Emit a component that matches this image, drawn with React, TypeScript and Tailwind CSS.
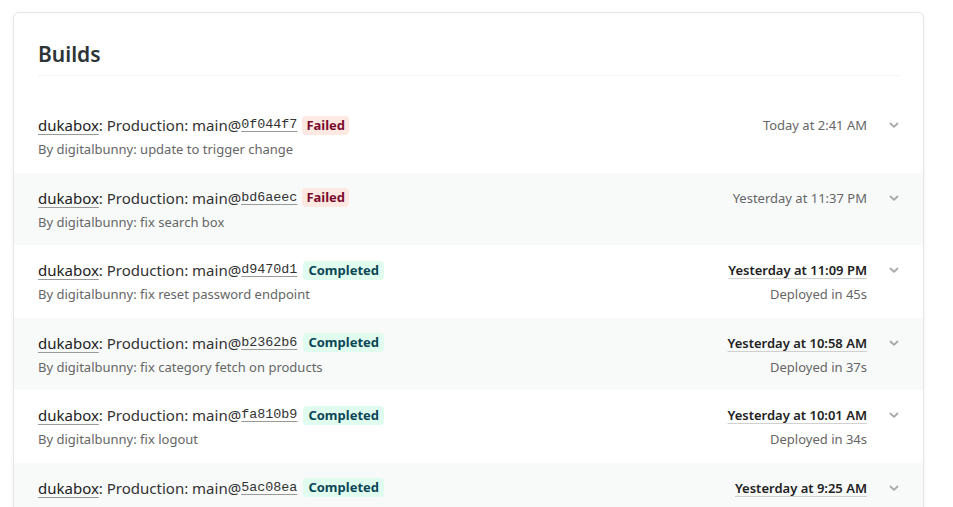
import React from "react";

type Build = {
  hash: string;
  status: "Failed" | "Completed";
  msg?: string;
  time: string;
  deployed?: string;
};

const builds: Build[] = [
  { hash: "0f044f7", status: "Failed", msg: "update to trigger change", time: "Today at 2:41 AM" },
  { hash: "bd6aeec", status: "Failed", msg: "fix search box", time: "Yesterday at 11:37 PM" },
  { hash: "d9470d1", status: "Completed", msg: "fix reset password endpoint", time: "Yesterday at 11:09 PM", deployed: "Deployed in 45s" },
  { hash: "b2362b6", status: "Completed", msg: "fix category fetch on products", time: "Yesterday at 10:58 AM", deployed: "Deployed in 37s" },
  { hash: "fa810b9", status: "Completed", msg: "fix logout", time: "Yesterday at 10:01 AM", deployed: "Deployed in 34s" },
  { hash: "5ac08ea", status: "Completed", time: "Yesterday at 9:25 AM" },
];

function Chevron() {
  return (
    <svg width="10" height="8" viewBox="0 0 10 8" className="shrink-0">
      <path d="M1.5 2.5 L5 5.8 L8.5 2.5" fill="none" stroke="#a8a8a8" strokeWidth="1.8" strokeLinecap="round" strokeLinejoin="round" />
    </svg>
  );
}

export default function App() {
  return (
    <div className="h-[507px] overflow-hidden bg-white pl-[13px] pr-[29px] pt-[12px] font-['Noto_Sans',sans-serif]">
      <div className="rounded-md border border-[#e6e6e6] bg-white shadow-[0_1px_4px_rgba(0,0,0,0.06)] overflow-hidden">
        <div className="px-6 pt-[25px]">
          <h1 className="text-[21px] leading-[32px] font-semibold text-[#2d3436] pb-[5px] border-b border-[#f2f3f3]">
            Builds
          </h1>
        </div>
        <div className="mt-[24px]">
          {builds.map((b, i) => (
            <div
              key={b.hash}
              className={`flex h-[72.6px] items-start justify-between px-6 pt-[15px] ${i % 2 === 1 ? "bg-[#f8fafa]" : "bg-white"}`}
            >
              <div className="flex flex-col gap-[4px]">
                <div className="flex items-center text-[15px] leading-[20px] text-[#333]">
                  <span className="underline decoration-[#9a9a9a] underline-offset-[3px] text-[#222]">dukabox</span>
                  <span>: Production: main@</span>
                  <span className="font-['Liberation_Mono',monospace] text-[13.4px] underline decoration-[#9a9a9a] underline-offset-[3px] text-[#333]">
                    {b.hash}
                  </span>
                  {b.status === "Failed" ? (
                    <span className="ml-[5px] rounded-[4px] bg-[#fde9e1] px-[4px] text-[13px] leading-[19px] font-bold text-[#7a0b2f]">
                      Failed
                    </span>
                  ) : (
                    <span className="ml-[6px] rounded-[4px] bg-[#dffcee] px-[5px] text-[13px] leading-[19px] font-bold text-[#0c4656]">
                      Completed
                    </span>
                  )}
                </div>
                {b.msg && <div className="text-[13px] leading-[20px] text-[#666]">By digitalbunny: {b.msg}</div>}
              </div>
              <div className="flex items-start gap-[22px]">
                <div className="flex flex-col items-end gap-[4px]">
                  {b.status === "Completed" ? (
                    <span className="text-[13px] leading-[20px] font-semibold text-[#222] underline decoration-[#d0d0d0] underline-offset-[3px]">
                      {b.time}
                    </span>
                  ) : (
                    <span className="text-[13px] leading-[20px] text-[#666]">{b.time}</span>
                  )}
                  {b.deployed && <span className="text-[13px] leading-[20px] text-[#666]">{b.deployed}</span>}
                </div>
                <div className="flex h-[20px] items-center">
                  <Chevron />
                </div>
              </div>
            </div>
          ))}
        </div>
      </div>
    </div>
  );
}
